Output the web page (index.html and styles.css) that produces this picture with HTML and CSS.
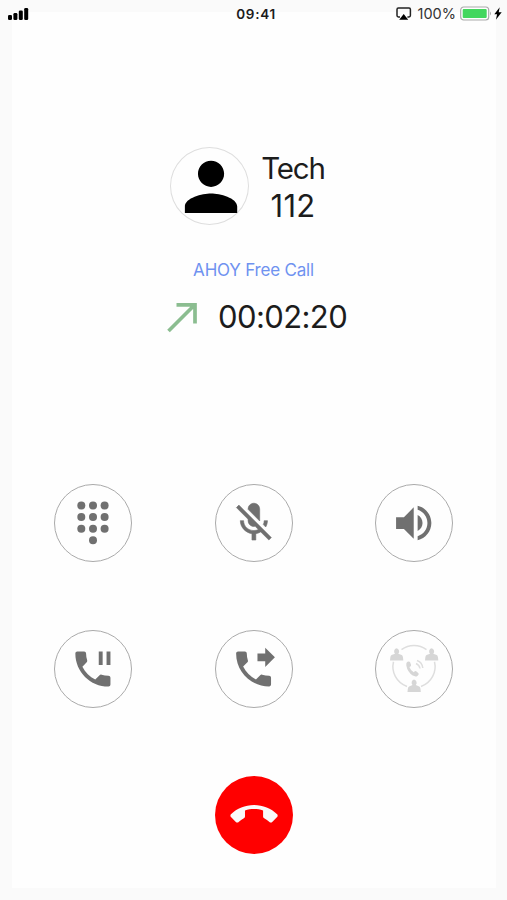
FILE: index.html
```html
<!DOCTYPE html>
<html lang="en">
<head>
<meta charset="utf-8">
<title>Call</title>
<link rel="stylesheet" href="styles.css">
</head>
<body>
<div class="screen">
  <header class="status">
    <svg class="signal" viewBox="0 0 22 14"><rect x="0" y="8" width="4" height="5" rx="1.3"/><rect x="5.4" y="6" width="4" height="7" rx="1.3"/><rect x="10.8" y="3.5" width="4" height="9.5" rx="1.3"/><rect x="16.2" y="1" width="4" height="12" rx="1.3"/></svg>
    <span class="clock">09:41</span>
    <div class="power">
      <svg class="airplay" viewBox="0 0 16 14"><path d="M4 10H2.400Q1 10 1 8.600V2.400Q1 1 2.400 1H13Q14.400 1 14.400 2.400V8.600Q14.400 10 13 10H11.400" fill="none" stroke="#222" stroke-width="1.500"/><path d="M7.700 7L12.200 12.800H3.200Z"/></svg>
      <span class="percent">100%</span>
      <svg class="battery" viewBox="0 0 32 16"><rect x=".7" y="1" width="28" height="13" rx="3" fill="#fff" stroke="#aaa" stroke-width="1.200"/><rect x="2.700" y="3" width="24" height="9" rx="1" fill="#43d75e"/><path d="M30 5.500Q32 7.500 30 9.500Z" fill="#aaa"/></svg>
      <svg class="bolt" viewBox="0 0 8 13"><path d="M5.700 .3L.3 7.300H3.100L1.900 12.700L7.700 5.300H4.700Z"/></svg>
    </div>
  </header>
  <main class="call">
    <section class="contact">
      <div class="avatar"><svg viewBox="-39 -39 78 78"><path transform="translate(-38.200 -38.300) scale(3.270)" d="M12 12c2.210 0 4-1.790 4-4s-1.790-4-4-4-4 1.790-4 4 1.790 4 4 4zm0 2c-2.670 0-8 1.340-8 4v2h16v-2c0-2.660-5.330-4-8-4z"/></svg></div>
      <div class="who"><span class="name">Tech</span><span class="number">112</span></div>
    </section>
    <p class="kind">AHOY Free Call</p>
    <div class="timer">
      <svg class="arrow" viewBox="0 0 31 31"><path d="M1.500 29L27.500 3M9.500 2.900H28V21.500" fill="none" stroke="#8bbd90" stroke-width="3.700"/></svg>
      <span class="elapsed">00:02:20</span>
    </div>
    <section class="controls">
      <button class="key" aria-label="Keypad"><svg viewBox="-39 -39 78 78"><circle cx="-11.700" cy="-17.500" r="4"/><circle cx="0" cy="-17.500" r="4"/><circle cx="11.600" cy="-17.500" r="4"/><circle cx="-11.700" cy="-5.900" r="4"/><circle cx="0" cy="-5.900" r="4"/><circle cx="11.600" cy="-5.900" r="4"/><circle cx="-11.700" cy="5.700" r="4"/><circle cx="0" cy="5.700" r="4"/><circle cx="11.600" cy="5.700" r="4"/><circle cx="0" cy="17.300" r="4"/></svg></button>
      <button class="key" aria-label="Mute"><svg viewBox="-39 -39 78 78"><path stroke="#707070" stroke-width=".3" transform="translate(-23.400 -23.700) scale(1.940)" d="M19 11h-1.700c0 .74-.16 1.430-.43 2.050l1.230 1.230c.56-.98.9-2.090.9-3.280zm-4.020.17c0-.06.02-.11.02-.17V5c0-1.660-1.340-3-3-3S9 3.340 9 5v.18l5.980 5.990zM4.270 3L3 4.270l6.010 6.010V11c0 1.660 1.330 3 2.990 3 .22 0 .44-.03.65-.08l1.660 1.660c-.71.33-1.500.52-2.310.52-2.760 0-5.300-2.100-5.300-5.100H5c0 3.410 2.720 6.230 6 6.720V21h2v-3.280c.91-.13 1.770-.45 2.540-.9L19.730 21 21 19.730 4.270 3z"/></svg></button>
      <button class="key" aria-label="Speaker"><svg viewBox="-39 -39 78 78"><path transform="translate(-23.800 -23.500) scale(1.960)" d="M3 9v6h4l5 5V4L7 9H3zm13.500 3c0-1.770-1.020-3.290-2.500-4.030v8.050c1.480-.73 2.500-2.250 2.500-4.020zM14 3.230v2.060c2.890.86 5 3.540 5 6.710s-2.110 5.850-5 6.710v2.060c4.010-.91 7-4.490 7-8.770s-2.990-7.860-7-8.770z"/></svg></button>
      <button class="key" aria-label="Hold"><svg viewBox="-39 -39 78 78"><path transform="translate(-23.500 -23.400) scale(1.950)" d="M17 3h-2v7h2V3zm3 12.500c-1.250 0-2.450-.2-3.570-.57-.35-.11-.74-.03-1.020.24l-2.200 2.200c-2.830-1.440-5.150-3.750-6.590-6.580l2.200-2.210c.28-.27.36-.66.25-1.010C8.700 6.450 8.500 5.250 8.500 4c0-.55-.45-1-1-1H4c-.55 0-1 .45-1 1 0 9.390 7.610 17 17 17 .55 0 1-.45 1-1v-3.500c0-.55-.45-1-1-1zM19 3v7h2V3h-2z"/></svg></button>
      <button class="key" aria-label="Transfer"><svg viewBox="-39 -39 78 78"><path transform="translate(-23.700 -23.300) scale(1.940)" d="M18 11l5-5-5-5v3h-4v4h4v3zm2 4.500c-1.250 0-2.450-.2-3.570-.57-.35-.11-.74-.03-1.020.24l-2.200 2.200c-2.830-1.440-5.150-3.750-6.590-6.590l2.200-2.210c.28-.26.36-.65.25-1C8.700 6.450 8.500 5.250 8.500 4c0-.55-.45-1-1-1H4c-.55 0-1 .45-1 1 0 9.390 7.610 17 17 17 .55 0 1-.45 1-1v-3.500c0-.55-.45-1-1-1z"/></svg></button>
      <button class="key conference" aria-label="Conference"><svg viewBox="-39 -39 78 78">
        <g fill="none" stroke="#dedede" stroke-width="1.500"><path d="M-12.500 -19.300A21 21 0 0 1 12.500 -19.300M20.500 -7.300A21 21 0 0 1 7 17.500M-7 17.500A21 21 0 0 1 -20.500 -7.300"/><path d="M2 -5.500A6.500 6.500 0 0 1 6 -.5M3 -8.500A9 9 0 0 1 8.800 -1"/></g>
        <path id="p" d="M-17.500 -20.800a3 3.300 0 0 1 1.800 5.600l3.400 1.300q1 .4 1.300 2.500l.3 3H-24l.3-3q.3-2.100 1.300-2.500l3.400-1.300a3 3.300 0 0 1 1.500-5.600z"/>
        <use href="#p" x="35"/><use href="#p" x="17.500" y="31.300"/>
        <path d="M-6.500 -7.300q2-.7 2.600.6l1 2.600q.2 1.300-1.700 2.100q1.200 3.700 4.400 5.200q1.500-1.700 2.700-.8l2 1.800q.9 1-1.100 2.700q-1.700 1.200-4.700-.3Q-6.500 3-7.700-3.500q-.4-3 1.200-3.800z"/></svg></button>
    </section>
    <button class="hangup" aria-label="End call"><svg viewBox="-39 -39 78 78"><path transform="translate(-23.600 -23.700) scale(1.970)" d="M12 9c-1.600 0-3.150.25-4.600.72v3.100c0 .39-.23.74-.56.9-.98.49-1.870 1.120-2.660 1.850-.18.18-.43.28-.7.28-.28 0-.53-.11-.71-.29L.29 13.080c-.18-.17-.29-.42-.29-.7 0-.28.11-.53.29-.71C3.340 8.780 7.460 7 12 7s8.660 1.780 11.710 4.670c.18.18.29.43.29.71 0 .28-.11.53-.29.71l-2.480 2.480c-.18.18-.43.29-.71.29-.27 0-.52-.11-.7-.28-.79-.74-1.690-1.360-2.670-1.850-.33-.16-.56-.5-.56-.9v-3.100C15.150 9.250 13.600 9 12 9z"/></svg></button>
  </main>
</div>
</body>
</html>
```
FILE: styles.css
```css
* { box-sizing: border-box; }
body { margin: 0; background: #fafafa; color: #1c1c1c; font-family: Inter, "Liberation Sans", sans-serif; }
svg { display: block; }
button { padding: 0; background: none; }
.screen { height: 900px; overflow: hidden; background: linear-gradient(#fefefe, #fefefe) 12px 12px / 484px 876px no-repeat; }
.status { display: grid; grid-template-columns: 1fr auto 1fr; align-items: center; height: 27px; padding: 0 5px 0 8px; }
.signal { width: 22px; height: 14px; }
.clock { font-size: 13.5px; font-weight: 600; letter-spacing: 0.7px; line-height: 27px; padding-top: 1px; margin-left: 2px; height: 27px; }
.power { display: flex; align-items: center; justify-content: flex-end; }
.airplay { width: 16px; height: 14px; margin-right: 6px; }
.percent { font-size: 14.5px; letter-spacing: 0; margin-right: 4px; color: #333; }
.battery { width: 32px; height: 16px; margin-right: 2px; }
.bolt { width: 8px; height: 13px; }
.call { display: flex; flex-direction: column; }
.contact { display: flex; align-items: flex-start; margin: 120px 0 0 170px; height: 78px; }
.avatar { width: 79px; height: 78px; border: 1px solid #dedede; border-radius: 50%; }
.avatar svg { width: 78px; height: 78px; margin: -1px 0 0 -0.5px; }
.who { display: flex; flex-direction: column; align-items: center; width: 64px; margin: 3px 0 0 12px; font-size: 30px; line-height: 37px; }
.name { font-size: 29.5px; letter-spacing: -1.2px; }
.number { font-size: 31px; letter-spacing: 0.3px; }
.kind { margin: 35px 0 0; height: 20px; text-align: center; font-size: 17px; line-height: 20px; letter-spacing: -0.2px; color: #6f92f0; }
.timer { display: flex; align-items: center; margin: 18px 0 0 167px; height: 38px; }
.arrow { width: 31px; height: 31px; margin-right: 20px; }
.elapsed { font-size: 31px; line-height: 38px; letter-spacing: -0.6px; }
.controls { display: grid; grid-template-columns: repeat(3, 78px); column-gap: 82.5px; row-gap: 67.5px; margin: 148.4px 0 0 54.3px; }
.key { width: 78px; height: 78px; border: 1.3px solid #aaa; border-radius: 50%; }
.key svg { width: 78px; height: 78px; margin: -1px; fill: #707070; }
.conference svg { fill: #d6d6d6; }
.hangup { width: 78px; height: 78px; margin: 68px 0 0 215px; border: 0; border-radius: 50%; background: #f00; }
.hangup svg { width: 78px; height: 78px; fill: #fafafa; }
```
